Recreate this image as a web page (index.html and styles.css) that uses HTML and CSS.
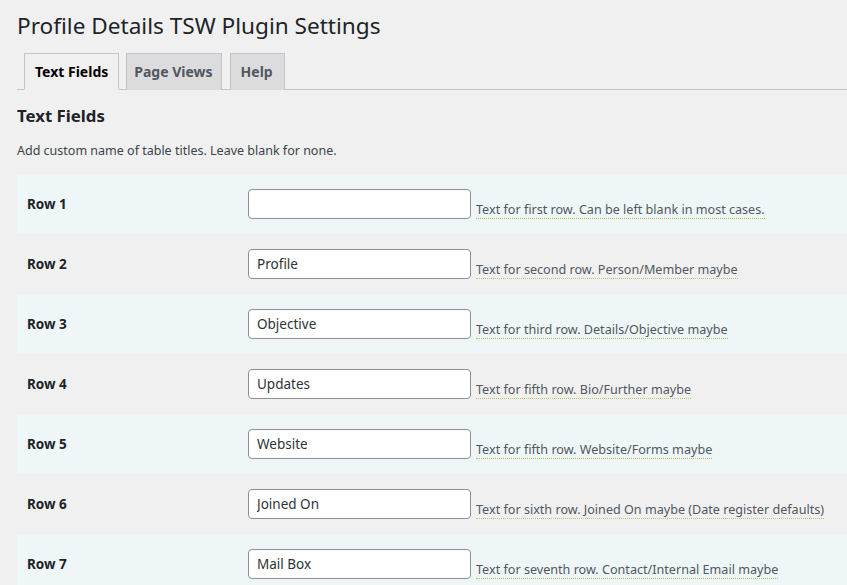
FILE: index.html
```html
<!DOCTYPE html>
<html>
<head>
<meta charset="utf-8">
<link rel="stylesheet" href="styles.css">
</head>
<body>
<div class="wrap">
  <h1 class="page-title">Profile Details TSW Plugin Settings</h1>
  <nav class="tabs">
    <span class="tab active">Text Fields</span>
    <span class="tab tab-narrow">Page Views</span>
    <span class="tab tab-short">Help</span>
  </nav>
  <h2 class="section-title">Text Fields</h2>
  <p class="intro">Add custom name of table titles. Leave blank for none.</p>
  <table class="form-table">
    <tr class="alt"><th>Row 1</th><td><input class="field" type="text" value=""><span class="hint">Text for first row. Can be left blank in most cases.</span></td></tr>
    <tr><th>Row 2</th><td><input class="field" type="text" value="Profile"><span class="hint">Text for second row. Person/Member maybe</span></td></tr>
    <tr class="alt"><th>Row 3</th><td><input class="field" type="text" value="Objective"><span class="hint">Text for third row. Details/Objective maybe</span></td></tr>
    <tr><th>Row 4</th><td><input class="field" type="text" value="Updates"><span class="hint">Text for fifth row. Bio/Further maybe</span></td></tr>
    <tr class="alt"><th>Row 5</th><td><input class="field" type="text" value="Website"><span class="hint">Text for fifth row. Website/Forms maybe</span></td></tr>
    <tr><th>Row 6</th><td><input class="field" type="text" value="Joined On"><span class="hint">Text for sixth row. Joined On maybe (Date register defaults)</span></td></tr>
    <tr class="alt"><th>Row 7</th><td><input class="field" type="text" value="Mail Box"><span class="hint">Text for seventh row. Contact/Internal Email maybe</span></td></tr>
  </table>
</div>
</body>
</html>
```
FILE: styles.css
```css
html, body {
  margin: 0;
  padding: 0;
  background: #f0f0f1;
  overflow: hidden;
}
body {
  font-family: "Noto Sans", "Open Sans", sans-serif;
  color: #1d2327;
  font-size: 13px;
}
.wrap {
  padding: 0 0 0 17px;
  width: 830px;
}
.page-title {
  font-size: 22.6px;
  font-weight: 400;
  margin: 0;
  padding: 11px 0 0;
  line-height: 29px;
  color: #1d2327;
}
.tabs {
  display: flex;
  margin-top: 13px;
  padding-left: 7px;
  border-bottom: 1px solid #c3c4c7;
}
.tab {
  font-size: 14px;
  font-weight: 700;
  line-height: 24px;
  padding: 6px 10px 5px;
  margin-right: 7px;
  border: 1px solid #c3c4c7;
  border-bottom: none;
  background: #dcdcde;
  color: #50575e;
  margin-bottom: -1px;
}
.tab-narrow {
  padding-left: 7px;
  padding-right: 8px;
  margin-right: 8px;
}
.tab-short {
  padding-left: 10px;
  padding-right: 11px;
}
.tab.active {
  background: #f0f0f1;
  color: #000;
  border-bottom: 1px solid #f0f0f1;
}
.section-title {
  font-size: 16.8px;
  font-weight: 700;
  margin: 14px 0 0;
  line-height: 23px;
}
.intro {
  margin: 15px 0 0;
  line-height: 18px;
  font-size: 12.5px;
  color: #3c434a;
}
.form-table {
  border-collapse: collapse;
  margin-top: 14px;
  width: 830px;
}
.form-table tr.alt {
  background: #eef6f8;
}
.form-table th {
  width: 230px;
  text-align: left;
  font-size: 13.5px;
  font-weight: 700;
  padding: 0 10px;
  vertical-align: middle;
  height: 60px;
  box-sizing: border-box;
}
.form-table td {
  padding: 0 0 0 1px;
  vertical-align: middle;
  white-space: nowrap;
}
.field {
  box-sizing: border-box;
  width: 223px;
  height: 30px;
  border: 1px solid #8c8f94;
  border-radius: 4px;
  padding: 0 8px;
  font-family: "Noto Sans", "Open Sans", sans-serif;
  font-size: 13.5px;
  color: #2c3338;
  background: #fff;
  vertical-align: middle;
  margin: 0;
}
.hint {
  display: inline-block;
  margin-left: 5px;
  font-size: 12.6px;
  color: #50575e;
  line-height: 16px;
  border-bottom: 1px dotted #b9c66f;
  vertical-align: -7px;
}
```
